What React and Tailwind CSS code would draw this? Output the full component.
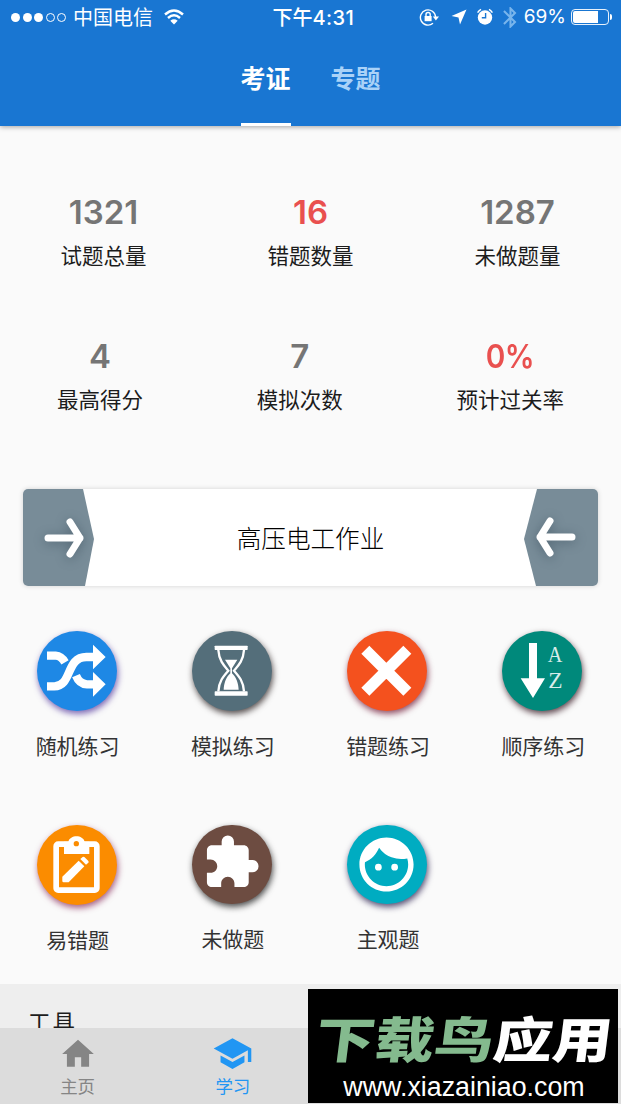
import { MdBluetooth, MdExtension, MdFace, MdHome, MdSchool } from 'react-icons/md';

const totals = [
  { value: '1321', label: '试题总量' },
  { value: '16', label: '错题数量', alert: true },
  { value: '1287', label: '未做题量' },
];

const results = [
  { value: '4', label: '最高得分' },
  { value: '7', label: '模拟次数' },
  { value: '0%', label: '预计过关率', alert: true, tight: true },
];

const practices = [
  { label: '随机练习', icon: ShuffleIcon, color: 'bg-[#1e88e5] shadow-[1px_3px_6px_rgba(70,40,150,0.7)]' },
  { label: '模拟练习', icon: HourglassIcon, color: 'bg-[#546e7a] shadow-[1px_3px_6px_rgba(30,20,20,0.75)]' },
  { label: '错题练习', icon: CrossIcon, color: 'bg-[#f4511e] shadow-[1px_3px_6px_rgba(110,20,50,0.75)]' },
  { label: '顺序练习', icon: SortIcon, color: 'bg-[#00897b] shadow-[1px_3px_6px_rgba(40,10,20,0.75)]' },
  { label: '易错题', icon: ClipboardIcon, color: 'bg-[#fb8c00] shadow-[1px_3px_6px_rgba(130,30,80,0.7)]' },
  { label: '未做题', icon: PuzzleIcon, color: 'bg-[#6d4c41] shadow-[1px_3px_6px_rgba(20,20,20,0.75)]' },
  { label: '主观题', icon: FaceIcon, color: 'bg-[#00acc1] shadow-[1px_3px_6px_rgba(30,20,70,0.75)]' },
];

function ShuffleIcon() {
  return (
    <svg viewBox="0 0 240 240" className="size-20" fill="none" stroke="#fff" strokeWidth="25">
      <path d="M30 74H56Q73 75 84 94" />
      <path d="M30 166H52C106 166 86 78 148 78H170" />
      <path d="M117 134Q127 159 150 160H170" />
      <path d="M168 41L206 78L168 115ZM168 123L206 160L168 197Z" fill="#fff" stroke="none" />
    </svg>
  );
}

function HourglassIcon() {
  return (
    <svg viewBox="0 0 240 240" className="size-20" fill="#fff">
      <rect x="68" y="44" width="99" height="13" rx="2" />
      <rect x="68" y="181" width="99" height="13" rx="2" />
      <path
        d="M79 57C81 88 95 103 109 119C93 137 81 151 79 181M156 57C154 88 140 103 126 119C142 137 154 151 156 181"
        fill="none"
        stroke="#fff"
        strokeWidth="7"
      />
      <path d="M99 86H136L120 112V127C134 140 139 158 140 176H95C96 158 101 140 115 127V112Z" />
    </svg>
  );
}

function CrossIcon() {
  return (
    <svg viewBox="0 0 240 240" className="size-20" stroke="#fff" strokeWidth="34">
      <path d="M55 56L181 182M181 56L55 182" />
    </svg>
  );
}

function SortIcon() {
  return (
    <svg viewBox="0 0 240 240" className="size-20" fill="#fff">
      <path d="M81 36H105V142H129L93 201L56 142H81Z" />
      <g fontSize="69" className="font-['Liberation_Serif',serif]" fillOpacity="0.85">
        <text x="137" y="94" textLength="44" lengthAdjust="spacingAndGlyphs">A</text>
        <text x="139" y="170" textLength="43" lengthAdjust="spacingAndGlyphs">Z</text>
      </g>
    </svg>
  );
}

function ClipboardIcon() {
  return (
    <svg viewBox="0 0 240 240" className="size-20" fill="#fff">
      <rect x="57.5" y="57.5" width="122" height="138" rx="6" fill="none" stroke="#fff" strokeWidth="17" />
      <path d="M81 50H94C99 28 138 28 143 50H157V87H81Z" />
      <circle cx="118" cy="56" r="8" fill="#fb8c00" />
      <path d="M76 155L125 107L142 124L95 172H80Q76 172 76 168Z" />
      <path d="M130 102L137 96Q140 94 143 97L154 108Q156 111 154 113L147 119Z" />
    </svg>
  );
}

function PuzzleIcon() {
  return <MdExtension size={59} className="-mt-[5px]" />;
}

function FaceIcon() {
  return <MdFace size={65} className="mr-[2px]" />;
}

function Stat({ value, label, alert, tight }) {
  return (
    <div className="flex flex-col items-center">
      <span
        className={`font-['Inter',sans-serif] text-[33px] leading-10 font-semibold ${alert ? 'text-[#e9504f]' : 'text-[#757575]'} ${tight ? 'scale-x-90 -tracking-[0.5px]' : ''}`}
      >
        {value}
      </span>
      <span className="mt-[7px] text-[21.5px] leading-8 text-[#1c1c1c]">{label}</span>
    </div>
  );
}

function StatusBar() {
  return (
    <div className="flex h-[34px] items-center text-[20px] leading-[34px]">
      <div className="flex flex-1 items-center pl-[11px]">
        <div className="flex gap-[2.5px]">
          <i className="size-[9px] rounded-full bg-white" />
          <i className="size-[9px] rounded-full bg-white" />
          <i className="size-[9px] rounded-full bg-white" />
          <i className="size-[9px] rounded-full border border-white" />
          <i className="size-[9px] rounded-full border border-white" />
        </div>
        <span className="ml-[7px]">中国电信</span>
        <svg viewBox="0 0 20 16" className="ml-[11px] h-4 w-5" fill="none" stroke="#fff" strokeWidth="2.4">
          <path d="M1 5.5Q10 -2.5 19 5.5" />
          <path d="M4 9Q10 3.6 16 9" />
          <path d="M10 15.5L6.3 11.7Q10 8.8 13.7 11.7Z" fill="#fff" stroke="none" />
        </svg>
      </div>
      <span className="w-[78px] font-medium whitespace-nowrap">
        下午<span className="font-['Inter',sans-serif] text-[20px] tracking-[0.4px]">4:31</span>
      </span>
      <div className="flex flex-1 items-center justify-end pr-[9px]">
        <svg viewBox="0 0 20 18" className="mr-3 h-[18px] w-5" fill="none" stroke="#fff" strokeWidth="1.4">
          <path d="M14 15.2A7.6 7.6 0 1 1 16.6 9" />
          <path d="M13.8 8.6H20L16.9 12.4Z" fill="#fff" stroke="none" />
          <rect x="5.6" y="8" width="7" height="5.2" fill="#fff" stroke="none" />
          <path d="M7 8V6.6A2.1 2.1 0 0 1 11.2 6.6V8" />
        </svg>
        <svg viewBox="0 0 16 16" className="mr-[9px] size-4" fill="#fff">
          <path d="M15.5 0.5L9 15.5L7.5 8.6L0.5 7Z" />
        </svg>
        <svg viewBox="0 0 18 18" className="mr-[9px] size-[18px]" fill="#fff">
          <circle cx="9" cy="9.5" r="7.2" />
          <path d="M1.6 4.6A11 11 0 0 1 5 1.4M16.4 4.6A11 11 0 0 0 13 1.4" stroke="#fff" strokeWidth="1.5" fill="none" />
          <path d="M9.6 5V9.8H5.8" stroke="#1976d2" strokeWidth="1.4" fill="none" />
        </svg>
        <MdBluetooth size={25} className="-mr-[3px] -ml-[5px] text-[#78b5ec]" />
        <span className="ml-1 font-['Inter',sans-serif] text-[19px]">69%</span>
        <div className="ml-[5px] h-4 w-[38px] rounded-[4px] border border-white/90 p-px">
          <div className="h-full w-[25px] rounded-l-[2px] bg-white" />
        </div>
        <i className="ml-px h-[6px] w-[2px] rounded-r bg-white" />
      </div>
    </div>
  );
}

function Arrow({ flip }) {
  return (
    <svg viewBox="0 0 74 97" className={`h-[97px] w-[74px] ${flip ? '-scale-x-100' : ''}`} fill="none">
      <path d={flip ? 'M0 0H61L74 50L62 97H0Z' : 'M0 0H60L71 50L62 97H0Z'} fill="#788c98" />
      <path
        d={flip ? 'M26 48H58M48 32L58 48L48 64' : 'M25 49H57M47 33L57 49L47 65'}
        stroke="#fff"
        strokeWidth="7"
        strokeLinecap="round"
        strokeLinejoin="round"
        className="drop-shadow-[0_2px_6px_rgba(40,60,75,0.45)]"
      />
    </svg>
  );
}

export default function App() {
  return (
    <div className="relative flex h-[1104px] w-[621px] flex-col overflow-hidden bg-[#fafafa] font-['Noto_Sans_CJK_SC',sans-serif]">
      <header className="h-[126px] shrink-0 bg-[#1976d2] text-white shadow-[0_1px_5px_rgba(0,0,0,0.35)]">
        <StatusBar />
        <nav className="flex h-[92px] justify-center gap-10 text-[25px] font-bold">
          <div className="flex w-[50px] justify-center border-b-[3px] border-white pt-6 leading-[38px]">考证</div>
          <div className="flex w-[50px] justify-center pt-6 leading-[38px] text-[#a9d2f8]">专题</div>
        </nav>
      </header>

      <section className="mt-[66px] flex shrink-0 justify-around">
        {totals.map((s) => (
          <Stat key={s.label} {...s} />
        ))}
      </section>
      <section className="mt-[65px] flex shrink-0 justify-around">
        {results.map((s) => (
          <Stat key={s.label} {...s} />
        ))}
      </section>

      <div className="mx-[23px] mt-[74px] flex h-[97px] shrink-0 items-center justify-between overflow-hidden rounded-[5px] bg-white shadow-[0_0_5px_rgba(0,0,0,0.16)]">
        <Arrow />
        <span className="text-[24.6px] font-light text-black">高压电工作业</span>
        <Arrow flip />
      </div>

      <section className="mt-[45px] grid shrink-0 grid-cols-4 gap-y-[66px]">
        {practices.map(({ label, icon: Icon, color }) => (
          <div key={label} className="flex h-32 flex-col items-center">
            <div className={`mr-[2px] flex size-20 items-center justify-center rounded-full text-white ${color}`}>
              <Icon />
            </div>
            <span className="mt-[19px] text-[21px] leading-[30px] text-[#333]">{label}</span>
          </div>
        ))}
      </section>

      <section className="mt-[31px] h-11 shrink-0 overflow-hidden bg-[#eee] pt-[21px] pl-7">
        <h2 className="text-[22.5px] leading-8 tracking-[2px] text-[#1c1c1c]">工具</h2>
      </section>

      <footer className="grid h-[76px] shrink-0 grid-cols-4 bg-[#dcdcdc]">
        <div className="flex flex-col items-center pt-[7px] text-[#858585]">
          <MdHome size={38} className="-mb-px" />
          <span className="text-[17.5px] leading-7">主页</span>
        </div>
        <div className="flex flex-col items-center pt-[5px] text-[#2196f3]">
          <MdSchool size={41} className="-mb-[2px]" />
          <span className="text-[17.5px] leading-7">学习</span>
        </div>
      </footer>

      <div className="absolute right-[3px] bottom-px flex h-[114px] w-[310px] flex-col items-center bg-black">
        <div className="mt-[19px] ml-[4px] h-[58px] scale-x-[1.21] -skew-x-6 text-[49px] leading-[58px] font-black whitespace-nowrap text-white">
          <span className="text-[#84ba8e]">下载鸟</span>应用
        </div>
        <span className="mt-[7px] ml-[2px] font-['Liberation_Sans',sans-serif] text-[26.8px] leading-7 text-white">www.xiazainiao.com</span>
      </div>
    </div>
  );
}
